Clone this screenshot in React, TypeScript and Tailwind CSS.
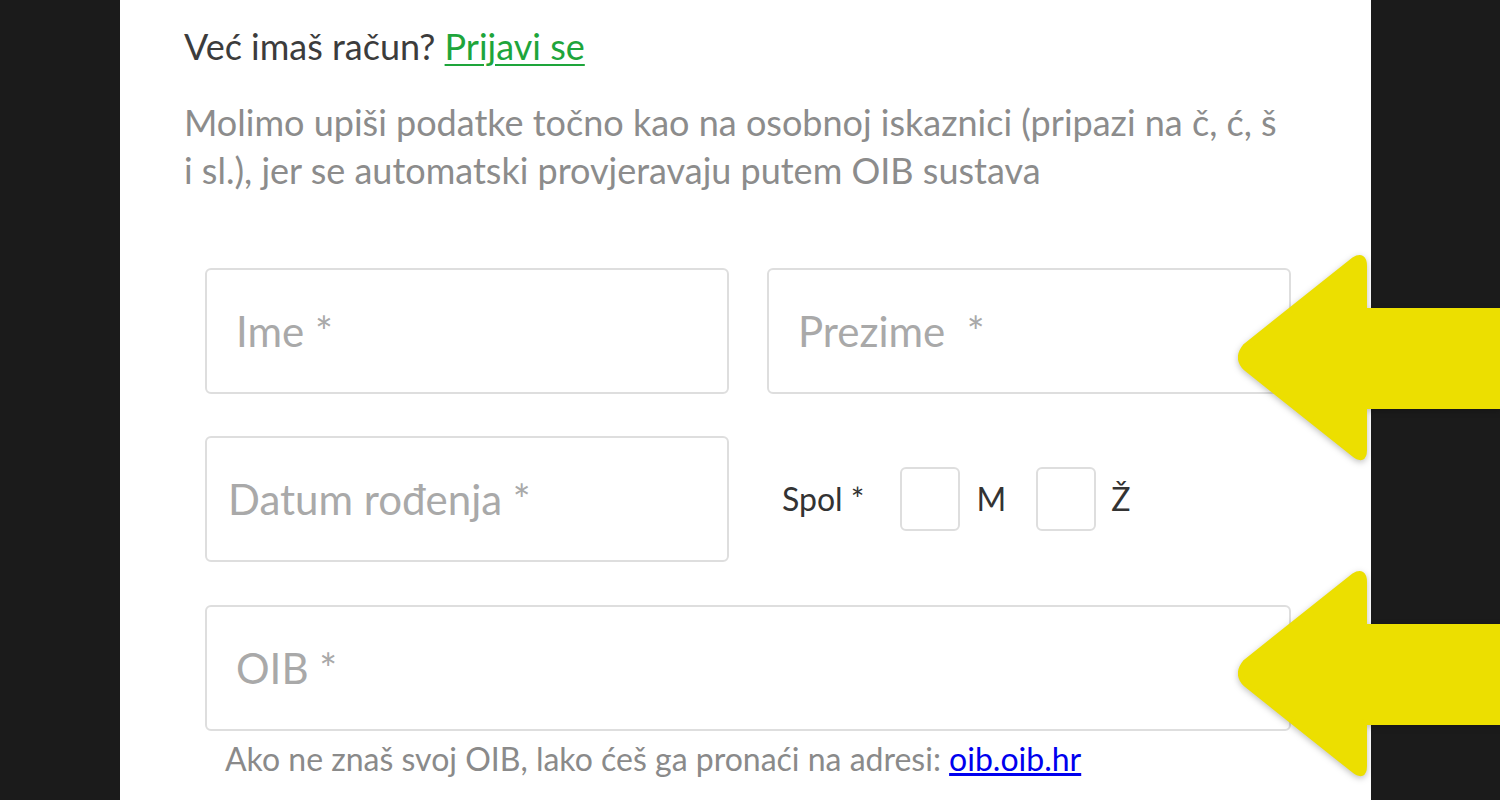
import React from 'react';

function Arrow({ top }: { top: number }) {
  // yellow pointer laid over the right edge of the form
  return (
    <svg
      className="absolute right-0 drop-shadow-[0_2px_3px_rgba(0,0,0,0.25)]"
      style={{ top }}
      width="264"
      height="212"
      viewBox="0 0 264 212"
    >
      <path
        d="M128 12 Q128 0 118 6 L10 92 Q0 104 10 114 L118 200 Q128 208 128 196 L128 152 L264 152 L264 57 L128 57 Z"
        fill="#ecdf00"
        stroke="#ecdf00"
        strokeWidth="6"
        strokeLinejoin="round"
      />
    </svg>
  );
}

function Field({ placeholder, className = '', tight = false }: { placeholder: string; className?: string; tight?: boolean }) {
  return (
    <input
      placeholder={placeholder}
      className={`h-[126px] rounded-md border-2 border-[#dedede] bg-white ${tight ? 'px-[21px]' : 'px-[29px]'} text-[42px] text-[#333] placeholder:text-[#a9a9a9] outline-none ${className}`}
    />
  );
}

export default function App() {
  return (
    <div className="relative h-[800px] w-[1500px] overflow-hidden bg-[#1b1b1b] font-['Lato',sans-serif]">
      <div className="ml-[120px] h-[800px] w-[1251px] bg-white pl-[64px] pt-[24px]">
        <p className="text-[36px] leading-[44px] text-[#3c3c3c]">
          Već imaš račun?{' '}
          <a href="#" className="text-[#1ea53b] underline decoration-2 underline-offset-4">
            Prijavi se
          </a>
        </p>
        <p className="mt-[30px] w-[1100px] text-[36px] leading-[48px] text-[#8c8c8c]">
          Molimo upiši podatke točno kao na osobnoj iskaznici (pripazi na č, ć, š i sl.), jer se automatski provjeravaju putem OIB sustava
        </p>

        <div className="ml-[21px] mt-[74px] w-[1086px]">
          <div className="grid grid-cols-2 gap-[38px]">
            <Field placeholder="Ime *" />
            <Field placeholder="Prezime  *" />
          </div>

          <div className="mt-[42px] flex items-center">
            <Field placeholder="Datum rođenja *" tight className="w-[524px]" />
            <div className="ml-[53px] flex items-center text-[32px] text-[#333]">
              <span>Spol *</span>
              <span className="ml-[36px] h-[64px] w-[60px] rounded-md border-2 border-[#dedede]" />
              <span className="ml-[16px]">M</span>
              <span className="ml-[30px] h-[64px] w-[60px] rounded-md border-2 border-[#dedede]" />
              <span className="ml-[15px]">Ž</span>
            </div>
          </div>

          <Field placeholder="OIB *" className="mt-[43px] w-full" />

          <p className="ml-[20px] mt-[8px] text-[32px] leading-[40px] text-[#8a8a8a]">
            Ako ne znaš svoj OIB, lako ćeš ga pronaći na adresi:{' '}
            <a href="#" className="text-[#0000ee] underline">
              oib.oib.hr
            </a>
          </p>
        </div>
      </div>

      <Arrow top={254} />
      <Arrow top={570} />
    </div>
  );
}
